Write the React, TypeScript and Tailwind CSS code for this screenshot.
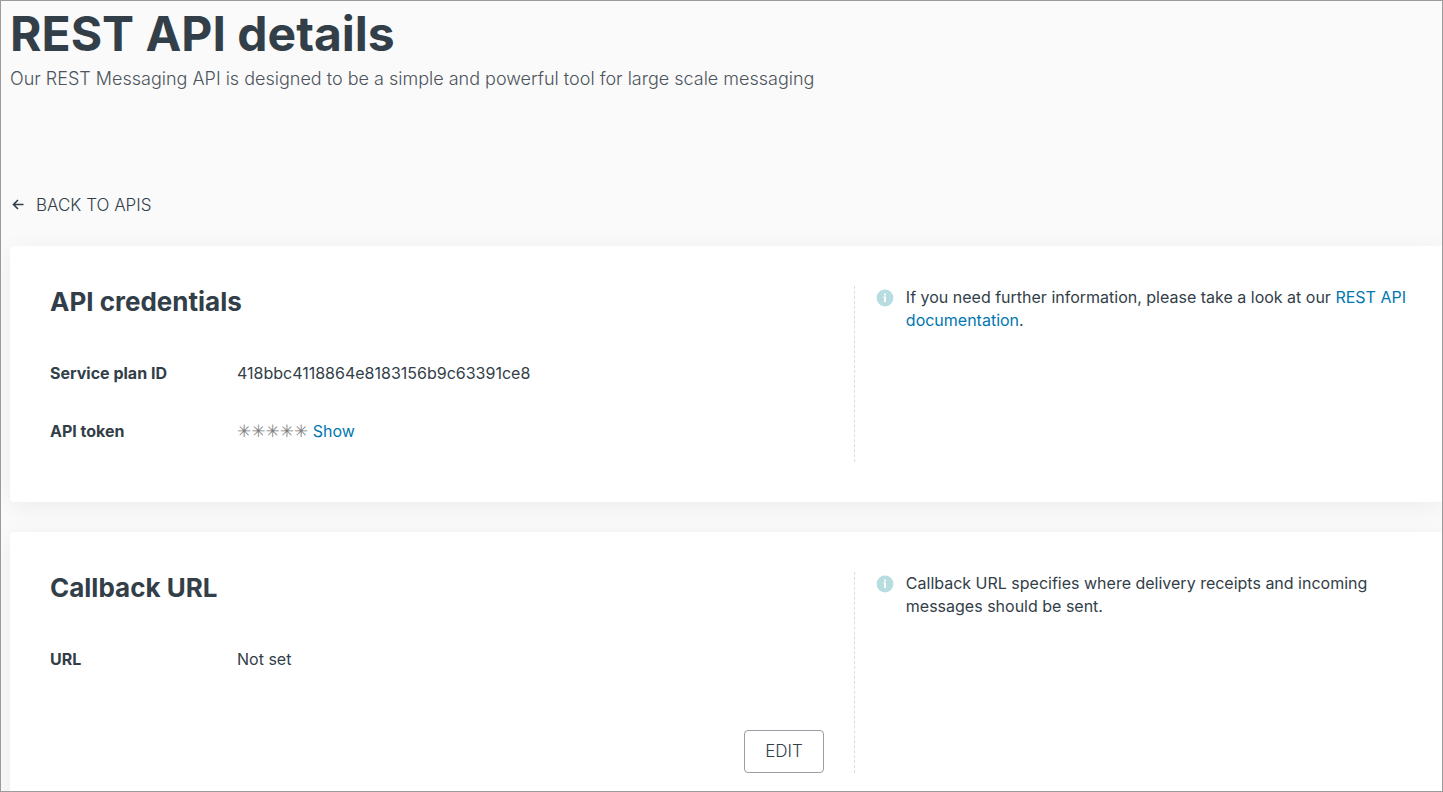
import { useState, type ReactNode } from 'react';

interface CardProps {
  title: string;
  help: ReactNode;
  children: ReactNode;
}

interface FieldProps {
  label: string;
  children: ReactNode;
}

function InfoIcon() {
  return (
    <svg viewBox="0 0 18 18" className="mt-[3px] size-[18px] shrink-0" aria-hidden="true">
      <circle cx="9" cy="9" r="8.4" fill="#b7dde0" />
      <rect x="8" y="4.5" width="2" height="2" fill="#fff" />
      <path d="M7.3 7.5H10v5.5H8V8.5h-.7z" fill="#fff" />
    </svg>
  );
}

/** White panel: content on the left, help text behind a dashed divider */
function Card({ title, help, children }: CardProps) {
  return (
    <section className="grid grid-cols-[7fr_5fr] rounded-l bg-white py-10 pr-[14px] pl-10 shadow-[0_4px_24px_rgba(0,0,0,0.06)]">
      <div className="pr-[30px]">
        <h2 className="text-[26px] leading-8 font-bold text-[#323e48]">{title}</h2>
        {children}
      </div>
      <div className="flex gap-3 border-l border-dashed border-[#dcdcdc] pl-[21px]">
        <InfoIcon />
        <p className="leading-[23px]">{help}</p>
      </div>
    </section>
  );
}

function Field({ label, children }: FieldProps) {
  return (
    <div className="flex leading-6">
      <dt className="w-[187px] shrink-0 font-bold">{label}</dt>
      <dd>{children}</dd>
    </div>
  );
}

export default function App() {
  const [showToken, setShowToken] = useState(false);

  return (
    <main className="h-screen overflow-hidden border border-[#9b9b9b] bg-[#fafafa] pl-[9px] font-['Inter',sans-serif] text-base text-[#323e48]">
      <h1 className="text-5xl leading-[66px] font-bold">REST API details</h1>
      <p className="text-lg leading-6 font-light text-[#4c545c]">
        Our REST Messaging API is designed to be a simple and powerful tool for large scale messaging
      </p>

      <a href="#apis" className="mt-[102px] flex w-fit items-center gap-[10px] text-[17px] leading-6 font-light">
        <svg viewBox="0 0 16 16" className="size-4" fill="none" stroke="currentColor" strokeWidth="1.6" aria-hidden="true">
          <path d="M13.5 7.5H3.5M8 3L3.5 7.5L8 12" />
        </svg>
        BACK TO APIS
      </a>

      <div className="mt-[29px] flex flex-col gap-[30px]">
        <Card
          title="API credentials"
          help={
            <>
              If you need further information, please take a look at our{' '}
              <a href="#docs" className="text-[#0077b0]">REST API documentation</a>.
            </>
          }
        >
          <dl className="mt-[43px] flex flex-col gap-[34px] pb-[19px]">
            <Field label="Service plan ID">418bbc4118864e8183156b9c63391ce8</Field>
            <Field label="API token">
              <span className="font-['DejaVu_Sans',sans-serif] text-[17px] text-[#808080]">✳✳✳✳✳</span>{' '}
              <button type="button" onClick={() => setShowToken(!showToken)} className="text-[#0077b0]">
                {showToken ? 'Hide' : 'Show'}
              </button>
            </Field>
          </dl>
        </Card>

        <Card
          title="Callback URL"
          help="Callback URL specifies where delivery receipts and incoming messages should be sent."
        >
          <dl className="mt-[43px]">
            <Field label="URL">Not set</Field>
          </dl>
          <div className="mt-[59px] flex justify-end">
            <button type="button" className="h-[43px] rounded border border-[#989ea4] px-5 text-[17px] font-light">EDIT</button>
          </div>
        </Card>
      </div>
    </main>
  );
}
